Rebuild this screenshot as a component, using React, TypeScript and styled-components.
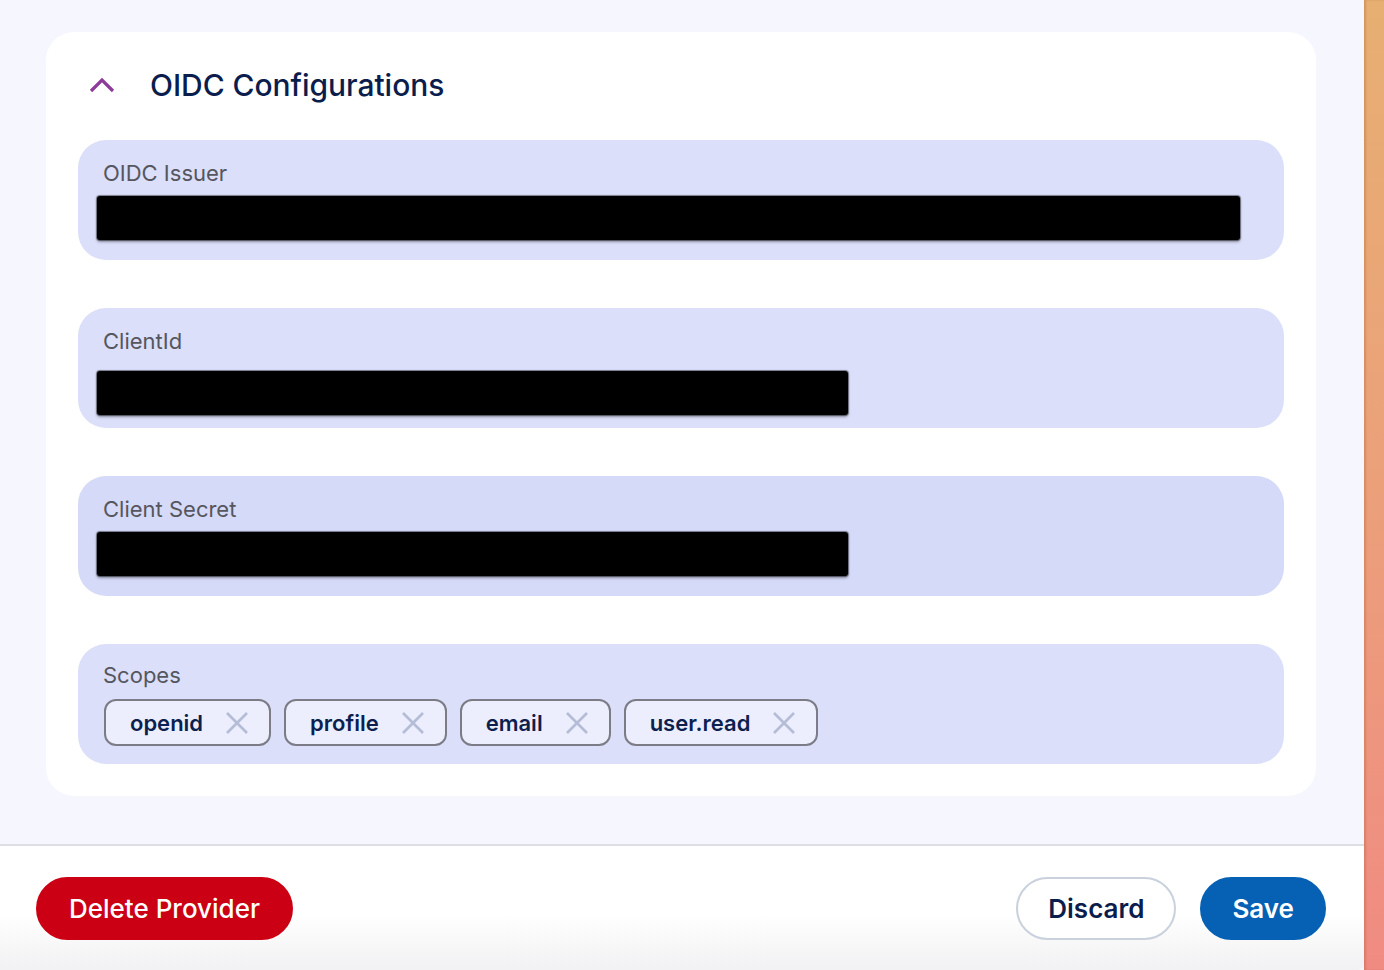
import React from "react";
import styled, { createGlobalStyle } from "styled-components";

const Global = createGlobalStyle`
  html, body { margin: 0; padding: 0; }
  body { font-family: Inter, "Noto Sans", sans-serif; background: #f5f6fe; }
  * { box-sizing: border-box; }
`;

const Page = styled.div`
  display: flex;
  width: 1384px;
  height: 970px;
  overflow: hidden;
`;

const Panel = styled.div`
  width: 1364px;
  display: flex;
  flex-direction: column;
  background: #f5f6fe;
`;

const Strip = styled.div`
  width: 20px;
  background: linear-gradient(to bottom, #e7af72 0%, #eba07a 50%, #f08b82 100%);
  box-shadow: inset 2px 0 2px rgba(150, 80, 30, 0.25);
`;

const Content = styled.div`
  flex: 1;
  padding: 32px 48px 0 46px;
  border-bottom: 2px solid #dedfe4;
`;

const Card = styled.section`
  background: #ffffff;
  border-radius: 28px;
  padding: 0 32px 32px 32px;
  display: flex;
  flex-direction: column;
  gap: 48px;
`;

const Header = styled.div`
  margin-bottom: -48px;
  height: 108px;
  display: flex;
  align-items: center;
  padding: 0 0 2px 11px;
  gap: 35px;
`;

const Title = styled.h2`
  margin: 0;
  font-size: 30px;
  font-weight: 500;
  color: #0b1d4d;
  letter-spacing: -0.05px;
`;

const Field = styled.div<{ $tone?: string }>`
  height: 120px;
  border-radius: 28px;
  background: ${(p) => p.$tone || "#dbdffa"};
  padding: 19px 24px 0 25px;
  display: flex;
  flex-direction: column;
`;

const Label = styled.div<{ $shift?: number }>`
  font-size: 22px;
  color: #55565e;
  line-height: 28px;
  margin-top: ${(p) => p.$shift || 0}px;
`;

const Redacted = styled.div<{ $w: number; $top: number }>`
  margin-top: ${(p) => p.$top}px;
  margin-left: -6px;
  height: 44px;
  width: ${(p) => p.$w}px;
  background: #000;
  border-radius: 3px;
  box-shadow: 0 2px 3px rgba(0, 0, 0, 0.35), 0 0 1px 1px rgba(0, 0, 0, 0.45);
`;

const Chips = styled.div`
  display: flex;
  gap: 13px;
  margin-top: 10px;
  margin-left: 1px;
`;

const Chip = styled.div`
  height: 47px;
  border: 2px solid #7b7c86;
  border-radius: 12px;
  background: #eceefd;
  display: flex;
  align-items: center;
  padding: 0 20px 0 24px;
  gap: 22px;
  font-size: 22px;
  font-weight: 600;
  color: #0d1f4f;
`;

const Footer = styled.div`
  height: 124px;
  background: linear-gradient(to bottom, #ffffff 55%, #f1f1f3 100%);
  border-bottom-right-radius: 8px;
  display: flex;
  align-items: center;
  padding: 0 38px 0 36px;
`;

const Spacer = styled.div`
  flex: 1;
`;

const Button = styled.button<{ $variant: "danger" | "outline" | "primary" }>`
  height: 63px;
  border-radius: 32px;
  font-family: inherit;
  font-size: 26px;
  font-weight: ${(p) => (p.$variant === "danger" ? 500 : 600)};
  padding: 0 ${(p) => (p.$variant === "danger" ? 31 : 30)}px;
  cursor: pointer;
  border: 2px solid
    ${(p) =>
      p.$variant === "danger" ? "#cc0014" : p.$variant === "primary" ? "#0661b4" : "#c9d1dd"};
  background: ${(p) =>
    p.$variant === "danger" ? "#cc0014" : p.$variant === "primary" ? "#0661b4" : "#ffffff"};
  color: ${(p) => (p.$variant === "outline" ? "#0b1d4d" : "#ffffff")};
`;

const ButtonGroup = styled.div`
  display: flex;
  gap: 24px;
`;

const Chevron = () => (
  <svg width="26" height="16" viewBox="0 0 26 16">
    <path d="M2 14 L13 3 L24 14" fill="none" stroke="#8d3c9c" strokeWidth="3.2" />
  </svg>
);

const Close = () => (
  <svg width="24" height="24" viewBox="0 0 24 24">
    <path d="M2 2 L22 22 M22 2 L2 22" stroke="#b4bcd6" strokeWidth="2.6" fill="none" />
  </svg>
);

const scopes = ["openid", "profile", "email", "user.read"];

export default function App() {
  return (
    <>
      <Global />
      <Page>
        <Panel>
          <Content>
            <Card>
              <Header>
                <Chevron />
                <Title>OIDC Configurations</Title>
              </Header>
              <Field>
                <Label>OIDC Issuer</Label>
                <Redacted $w={1143} $top={9} />
              </Field>
              <Field>
                <Label>ClientId</Label>
                <Redacted $w={751} $top={16} />
              </Field>
              <Field $tone="#d5daf8">
                <Label>Client Secret</Label>
                <Redacted $w={751} $top={9} />
              </Field>
              <Field>
                <Label $shift={-2}>Scopes</Label>
                <Chips>
                  {scopes.map((s) => (
                    <Chip key={s}>
                      {s}
                      <Close />
                    </Chip>
                  ))}
                </Chips>
              </Field>
            </Card>
          </Content>
          <Footer>
            <Button $variant="danger">Delete Provider</Button>
            <Spacer />
            <ButtonGroup>
              <Button $variant="outline">Discard</Button>
              <Button $variant="primary">Save</Button>
            </ButtonGroup>
          </Footer>
        </Panel>
        <Strip />
      </Page>
    </>
  );
}
